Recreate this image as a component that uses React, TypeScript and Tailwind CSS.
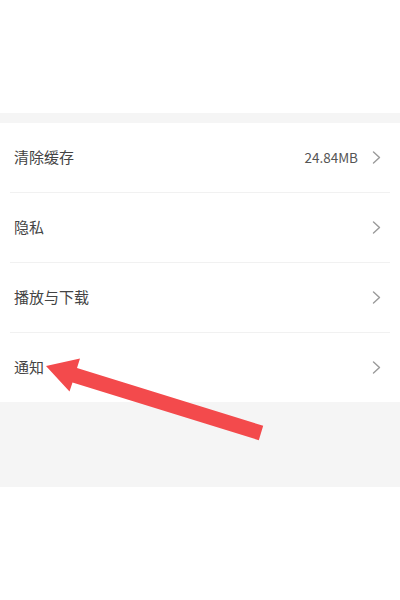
import { Fragment } from 'react'

interface SettingItem {
  label: string
  value?: string
}

const items: SettingItem[] = [
  { label: '清除缓存', value: '24.84MB' },
  { label: '隐私' },
  { label: '播放与下载' },
  { label: '通知' },
]

function Chevron() {
  return (
    <svg width="9" height="13" viewBox="0 0 9 13" fill="none" className="shrink-0">
      <path d="M1.5 1l6 5.5-6 5.5" stroke="#9a9a9a" strokeWidth="1.4" strokeLinecap="round" strokeLinejoin="round" />
    </svg>
  )
}

export default function App() {
  return (
    <div
      className="relative w-[400px] h-[600px] bg-white overflow-hidden"
      style={{ fontFamily: '"Noto Sans CJK SC", "Noto Sans", sans-serif' }}
    >
      <div className="h-[113px] bg-white" />
      <div className="h-[10px] bg-[#f5f5f5]" />

      {/* Settings list */}
      <div className="bg-white">
        {items.map((item, index) => (
          <Fragment key={item.label}>
            {index > 0 && <div className="mx-[10px] h-px bg-[#f1f1f1]" />}
            <div className="h-[69px] flex items-center pl-[14px] pr-[19px]">
              <span className="flex-1 text-[15px] text-[#444]">{item.label}</span>
              {item.value && (
                <span className="text-[13.5px] text-[#555] mr-[14px]">{item.value}</span>
              )}
              <Chevron />
            </div>
          </Fragment>
        ))}
      </div>

      <div className="h-[85px] bg-[#f5f5f5]" />

      {/* Red annotation arrow */}
      <svg className="absolute left-0 top-0 pointer-events-none" width="400" height="600" viewBox="0 0 400 600">
        <polygon
          points="46,366 80,358.5 77,368 263.2,425.8 258.8,440.2 72.5,382.5 69.5,391.5"
          fill="#f34a4c"
        />
      </svg>
    </div>
  )
}
